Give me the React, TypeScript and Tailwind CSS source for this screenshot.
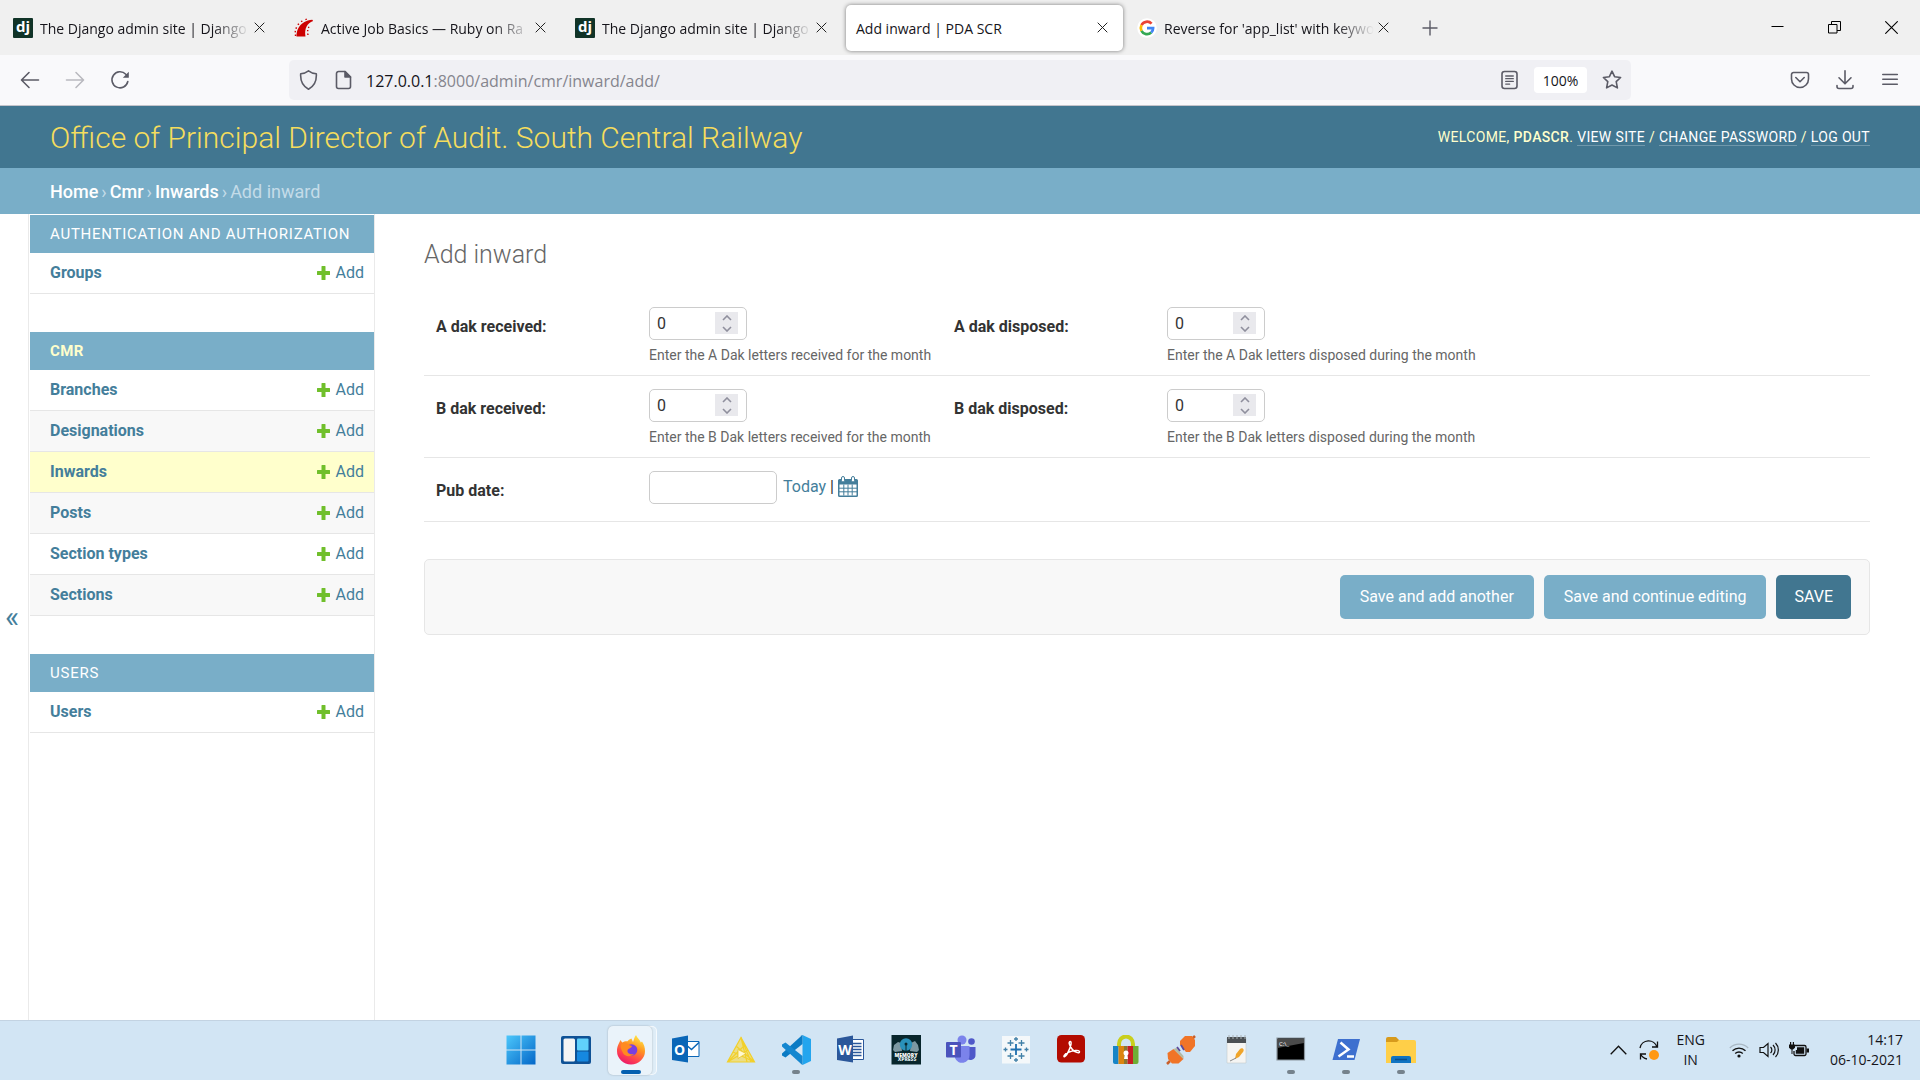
import { useState, type ReactNode } from "react";

interface Tab {
  title: string;
  icon?: "django" | "rails" | "google";
  active?: boolean;
}

const TABS: Tab[] = [
  { title: "The Django admin site | Django", icon: "django" },
  { title: "Active Job Basics — Ruby on Ra", icon: "rails" },
  { title: "The Django admin site | Django", icon: "django" },
  { title: "Add inward | PDA SCR", active: true },
  { title: "Reverse for 'app_list' with keywo", icon: "google" },
];

const APPS = [
  { name: "Authentication and Authorization", models: ["Groups"] },
  { name: "CMR", models: ["Branches", "Designations", "Inwards", "Posts", "Section types", "Sections"], current: true },
  { name: "Users", models: ["Users"] },
];

const App = () => (
  <div className="flex min-h-screen flex-col bg-white font-['Roboto',sans-serif] text-[#333]">
    <TabStrip />
    <Toolbar />
    <SiteHeader />
    <div className="flex grow">
      <Sidebar />
      <InwardForm />
    </div>
    <Taskbar />
  </div>
);

/* ---------- browser chrome ---------- */

const TabStrip = () => (
  <div className="flex h-[55px] items-center bg-[#f0f0f0] pl-px font-['Open_Sans',sans-serif]">
    {TABS.map((tab, i) => (
      <div
        key={i}
        className={
          tab.active
            ? "mx-0.5 flex h-[46px] w-[277px] items-center gap-1 rounded-[5px] bg-white pr-[15px] pl-2.5 shadow-[0_0_4px_rgba(0,0,0,0.5)]"
            : "mx-0.5 flex h-[46px] w-[277px] items-center gap-1 pr-[15px] pl-2.5"
        }
      >
        {tab.icon && <Favicon name={tab.icon} />}
        <span
          className={
            tab.active
              ? "grow pt-0.5 text-sm whitespace-nowrap text-[#15141a]"
              : "ml-[3px] grow pt-0.5 text-sm whitespace-nowrap text-[#15141a] [mask-image:linear-gradient(to_right,black_82%,transparent)]"
          }
        >
          {tab.title}
        </span>
        <button aria-label="Close tab">
          <svg width="11" height="11" viewBox="0 0 11 11" stroke="#222" fill="none"><path d="M.7.7l9.6 9.6M10.3.7L.7 10.3" /></svg>
        </button>
      </div>
    ))}
    <button aria-label="New tab" className="ml-4">
      <svg width="16" height="16" viewBox="0 0 16 16" stroke="#5b5b66" strokeWidth="1.4"><path d="M8 .5v15M.5 8h15" /></svg>
    </button>
    <div className="ml-auto flex items-center gap-11 pr-[22px]">
      <button aria-label="Minimize">
        <svg width="13" height="13" viewBox="0 0 13 13" stroke="#000"><path d="M.5 5.5h12" /></svg>
      </button>
      <button aria-label="Restore">
        <svg width="13" height="13" viewBox="0 0 13 13" stroke="#000" fill="none">
          <path d="M.5 3.5h8.5v8.5H.5zM3.5 3.5v-3h9v9H9" />
        </svg>
      </button>
      <button aria-label="Close window">
        <svg width="13" height="13" viewBox="0 0 13 13" stroke="#000" strokeWidth="1.1"><path d="M.3.3l12.4 12.4M12.7.3L.3 12.7" /></svg>
      </button>
    </div>
  </div>
);

const Favicon = ({ name }: { name: "django" | "rails" | "google" }) => {
  if (name === "django") {
    return (
      <span className="flex size-5 shrink-0 items-center justify-center rounded-[1px] bg-[#103327] pb-0.5 text-[15px] leading-none font-bold text-white">
        dj
      </span>
    );
  }
  if (name === "rails") {
    return (
      <svg className="shrink-0" width="20" height="20" viewBox="0 0 20 20" fill="#c00">
        <path d="M2.5 18.5c0-6.500 3-15.500 15.800-16.800l.8 1.300c-6 2-9 8-7.600 15.500z" />
        <path d="M.7 12.700l1.400.4-.3 1.300-1.300-.2zM1.900 9l1.300.7-.6 1.200-1.300-.5zM4.300 5.200l1.100 1-.9 1-1.200-.9zM8 2.400l.7 1.200-1.200.7-.8-1.200zM12.600.6l.4 1.200-1.400.4-.4-1.100zM.8 16.500h1.300V18H.8zM13 15.500h1.400l.3 1.400h-1.400zM13 12h1.400v1.300H13zM14.300 8.500l1.200.5-.5 1.200-1.200-.5z" />
      </svg>
    );
  }
  return (
    <svg className="shrink-0" width="20" height="20" viewBox="0 0 20 20" fill="none" strokeWidth="2.700">
      <circle cx="10" cy="10" r="9.800" fill="#fff" />
      <path d="M14.600 5.700A6.200 6.200 0 0 0 4.500 7.200" stroke="#ea4335" />
      <path d="M4.500 7.200a6.200 6.200 0 0 0 0 5.600" stroke="#fbbc05" />
      <path d="M4.500 12.800a6.200 6.200 0 0 0 9.700 1.800" stroke="#34a853" />
      <path d="M14.200 14.600a6 6 0 0 0 1.900-4.400H10" stroke="#4285f4" />
    </svg>
  );
};

const Toolbar = () => (
  <div className="flex h-[51px] items-center border-b border-[#c4c4cb] bg-[#f9f9fb] font-['Open_Sans',sans-serif] text-[#5b5b66]">
    <div className="flex w-[289px] items-center gap-[25px] pl-5">
      <button aria-label="Back"><ChromeIcon><path d="M18.500 10H2M9 2.500L1.500 10 9 17.500" /></ChromeIcon></button>
      <button aria-label="Forward" className="opacity-40"><ChromeIcon><path d="M1.500 10H18M11 2.500l7.500 7.500-7.500 7.500" /></ChromeIcon></button>
      <button aria-label="Reload">
        <ChromeIcon>
          <path d="M17.800 11.500a8 8 0 1 1-2-7.200l1.500 1.500" />
          <path d="M18.800 1.800v6h-6z" fill="currentColor" stroke="none" />
        </ChromeIcon>
      </button>
    </div>
    <div className="flex h-10 grow items-center rounded-[5px] bg-[#f0f0f4] px-[9px]">
      <ChromeIcon><path d="M10.500 .8C13 2.700 15.500 3.500 18.300 3.700c.5 6.800-1.600 12.300-7.800 15.500C4.300 16 2.200 10.500 2.700 3.700 5.500 3.500 8 2.700 10.500 .8z" /></ChromeIcon>
      <span className="ml-4 flex">
        <ChromeIcon>
          <path d="M4.500 1.500H11l5.500 5.500v9.500a2 2 0 0 1-2 2h-10a2 2 0 0 1-2-2v-13a2 2 0 0 1 2-2z" />
          <path d="M11 1.500V7h5.500z" fill="currentColor" />
        </ChromeIcon>
      </span>
      <div className="ml-3 grow pt-0.5 text-base whitespace-nowrap text-[#85858e]">
        <span className="text-[#15141a]">127.0.0.1</span>:8000/admin/cmr/inward/add/
      </div>
      <button aria-label="Reader view">
        <ChromeIcon>
          <rect x="2" y="1.500" width="15" height="17" rx="2.500" />
          <path d="M5.700 6h7.600M5.700 8.700h7.600M5.700 11.400h7.600M5.700 14.100h4" strokeWidth="1.300" />
        </ChromeIcon>
      </button>
      <button className="ml-3.5 h-[26px] w-[53px] rounded-[4px] bg-white pt-px text-sm text-[#15141a]">100%</button>
      <button aria-label="Bookmark" className="ml-[15px]">
        <ChromeIcon><path d="M10 1.200l2.600 5.500 6 .8-4.400 4.200 1.200 6.200L10 15l-5.400 2.900 1.200-6.200L1.400 7.500l6-.8z" /></ChromeIcon>
      </button>
    </div>
    <div className="flex w-[289px] items-center justify-end gap-[25px] pr-5">
      <button aria-label="Pocket">
        <ChromeIcon><path d="M3.500 2.500h13a2 2 0 0 1 2 2V9a8.500 8.500 0 0 1-17 0V4.500a2 2 0 0 1 2-2zM5.800 7.500L10 11.700l4.200-4.200" /></ChromeIcon>
      </button>
      <button aria-label="Downloads">
        <ChromeIcon><path d="M10 .8v12.500M4 7.800l6 6 6-6M2 15.500v1a2 2 0 0 0 2 2h12a2 2 0 0 0 2-2v-1" /></ChromeIcon>
      </button>
      <button aria-label="Menu"><ChromeIcon><path d="M2.800 4.500h14.500M2.800 9.300h14.500M2.800 14.200h14.500" /></ChromeIcon></button>
    </div>
  </div>
);

const ChromeIcon = ({ children }: { children: ReactNode }) => (
  <svg className="shrink-0" width="20" height="20" viewBox="0 0 20 20" fill="none" stroke="currentColor" strokeWidth="1.600" strokeLinecap="round" strokeLinejoin="round">
    {children}
  </svg>
);

/* ---------- admin site ---------- */

const SiteHeader = () => (
  <header>
    <div className="flex h-[62px] items-center justify-between bg-[#417690] px-[50px] text-[#ffc]">
      <a href="#" className="text-[30px] font-light text-[#f5dd5d]">Office of Principal Director of Audit. South Central Railway</a>
      <div className="text-sm tracking-wide whitespace-nowrap uppercase">
        Welcome, <strong className="font-medium">pdascr</strong>. <UserLink>View site</UserLink> / <UserLink>Change password</UserLink> /{" "}
        <UserLink>Log out</UserLink>
      </div>
    </div>
    <nav className="flex h-[46px] items-center gap-[3px] bg-[#79aec8] px-[50px] pt-0.5 text-lg text-[#c4dce8]">
      <a href="#" className="font-medium text-white">Home</a>›<a href="#" className="font-medium text-white">Cmr</a>›
      <a href="#" className="font-medium text-white">Inwards</a>› <span>Add inward</span>
    </nav>
  </header>
);

const UserLink = ({ children }: { children: ReactNode }) => (
  <a href="#" className="border-b border-white/25 text-white">{children}</a>
);

const Sidebar = () => (
  <>
    <button aria-label="Toggle navigation" className="w-[29px] border-r border-[#eaeaea] pr-1 text-3xl text-[#447e9b]">«</button>
    <nav className="flex w-[346px] flex-col gap-[38px] border-r border-[#eaeaea] pt-px pl-px">
      {APPS.map((app) => (
        <table key={app.name} className="w-full border-separate border-spacing-0 text-base">
          <caption
            className={
              app.current
                ? "h-[38px] bg-[#79aec8] px-5 text-left text-[15px] leading-[38px] font-bold tracking-wide text-[#ffc] uppercase"
                : "h-[38px] bg-[#79aec8] px-5 text-left text-[15px] leading-[38px] tracking-wider text-white uppercase"
            }
          >
            <a href="#">{app.name}</a>
          </caption>
          <tbody>
            {app.models.map((model, i) => (
              <ModelRow key={model} model={model} alt={i % 2 === 1} />
            ))}
          </tbody>
        </table>
      ))}
    </nav>
  </>
);

const ModelRow = ({ model, alt }: { model: string; alt: boolean }) => {
  const bg = model === "Inwards" ? "bg-[#ffc]" : alt ? "bg-[#f8f8f8]" : "bg-white";
  return (
    <tr className={`h-[41px] text-[#447e9b] ${bg}`}>
      <th scope="row" className="border-b border-[#e6e6e6] pl-5 text-left font-bold"><a href="#">{model}</a></th>
      <td className="border-b border-[#e6e6e6] pr-2.5">
        <a href="#" className="flex items-center justify-end gap-1.5">
          <svg width="13" height="14" viewBox="0 0 13 14" fill="#70bf2b"><path d="M5 0h3a.5.5 0 0 1 .5.5V5h4a.5.5 0 0 1 .5.5v3a.5.5 0 0 1-.5.5h-4v4.500a.5.5 0 0 1-.5.5H5a.5.5 0 0 1-.5-.5V9h-4a.5.5 0 0 1-.5-.5v-3A.5.5 0 0 1 .5 5h4V.5A.5.5 0 0 1 5 0z" /></svg>
          Add
        </a>
      </td>
    </tr>
  );
};

const InwardForm = () => (
  <main className="grow pt-[26px] pr-[50px] pl-[49px]">
    <h1 className="text-[25px] leading-[30px] font-light text-[#666]">Add inward</h1>
    <form onSubmit={(e) => e.preventDefault()}>
      <div className="mt-6">
        <DakRow letter="A" />
        <DakRow letter="B" />
        <div className="flex h-16 border-b border-[#e6e6e6] px-3 pt-[13px]">
          <label htmlFor="id_pub_date" className="w-[213px] pt-2.5 text-base leading-5 font-bold">Pub date:</label>
          <input id="id_pub_date" type="text" className="h-[33px] w-32 rounded-[5px] border border-[#ccc] px-[7px]" />
          <span className="ml-1.5 flex h-8 items-center gap-1 text-base">
            <a href="#" className="text-[#447e9b]">Today</a>|
            <a href="#" aria-label="Open calendar" className="pb-0.5"><CalendarIcon /></a>
          </span>
        </div>
      </div>
      <div className="mt-[37px] flex items-center justify-end gap-2.5 rounded-[5px] border border-[#e6e6e6] bg-[#f8f8f8] px-[18px] py-[15px] text-base text-white">
        <button className="h-11 rounded-[5px] bg-[#79aec8] px-5">Save and add another</button>
        <button className="h-11 rounded-[5px] bg-[#79aec8] px-5">Save and continue editing</button>
        <button className="h-11 rounded-[5px] bg-[#417690] px-[18px] uppercase">Save</button>
      </div>
    </form>
  </main>
);

const DakRow = ({ letter }: { letter: string }) => (
  <div className="grid h-[82px] grid-cols-[518px_1fr] border-b border-[#e6e6e6] px-3 pt-[13px]">
    <NumberField label={`${letter} dak received:`} help={`Enter the ${letter} Dak letters received for the month`} />
    <NumberField label={`${letter} dak disposed:`} help={`Enter the ${letter} Dak letters disposed during the month`} />
  </div>
);

const NumberField = ({ label, help }: { label: string; help: string }) => {
  const [value, setValue] = useState(0);
  const id = "id_" + label.toLowerCase().replace(":", "").replace(/ /g, "_");
  return (
    <div className="flex">
      <label htmlFor={id} className="w-[213px] shrink-0 pt-2.5 text-base leading-5 font-bold">{label}</label>
      <div>
        <div className="relative h-[33px] w-[98px]">
          <input id={id} type="number" value={value} onChange={(e) => setValue(Number(e.target.value))}
            className="h-full w-full [appearance:textfield] rounded-[5px] border border-[#ccc] px-[7px] text-base [&::-webkit-inner-spin-button]:appearance-none" />
          <div className="absolute top-[5px] right-[9px] flex h-[22px] w-[23px] flex-col bg-[#e9e9ed]">
            <button type="button" aria-label="Increase" className="flex h-[11px] items-center justify-center" onClick={() => setValue(value + 1)}>
              <svg width="10" height="6" viewBox="0 0 10 6" fill="none" stroke="#8f8f9d" strokeWidth="1.600"><path d="M1 5l4-4 4 4" /></svg>
            </button>
            <button type="button" aria-label="Decrease" className="flex h-[11px] items-center justify-center" onClick={() => setValue(value - 1)}>
              <svg width="10" height="6" viewBox="0 0 10 6" fill="none" stroke="#8f8f9d" strokeWidth="1.600"><path d="M1 1l4 4 4-4" /></svg>
            </button>
          </div>
        </div>
        <p className="mt-1.5 text-sm leading-[18px] whitespace-nowrap text-[#666]">{help}</p>
      </div>
    </div>
  );
};

const CalendarIcon = () => (
  <svg width="20" height="21" viewBox="0 0 20 21">
    <path d="M1.500 3h17A1.500 1.500 0 0 1 20 4.500v15a1.500 1.500 0 0 1-1.500 1.500h-17A1.500 1.500 0 0 1 0 19.500v-15A1.500 1.500 0 0 1 1.500 3z" fill="#447e9b" />
    <path d="M1.500 8.500h17v11h-17z" fill="#fff" />
    <path d="M1 12.200h18M1 15.800h18M5.800 8.500v11M10 8.500v11M14.200 8.500v11" stroke="#447e9b" strokeWidth="1" />
    <rect x="3.500" y=".5" width="3" height="5.500" rx="1.500" fill="#fff" stroke="#447e9b" />
    <rect x="13.500" y=".5" width="3" height="5.500" rx="1.500" fill="#fff" stroke="#447e9b" />
  </svg>
);

/* ---------- taskbar ---------- */

const Taskbar = () => (
  <footer className="grid h-[60px] grid-cols-[1fr_auto_1fr] border-t border-[#c3d3e2] bg-[#d2e5f4] font-['Open_Sans',sans-serif] text-sm text-[#15141a]">
    <div />
    <div className="flex pl-0.5">
      <TaskItem label="Start">
        <defs>
          <linearGradient id="win" x1="0" y1="0" x2="1" y2="1"><stop stopColor="#4cc7fb" /><stop offset="1" stopColor="#0467c8" /></linearGradient>
        </defs>
        <path d="M.5.5h14v14H.5zM15.500.5h14v14h-14zM.5 15.500h14v14H.5zM15.500 15.500h14v14h-14z" fill="url(#win)" />
      </TaskItem>
      <TaskItem label="Widgets">
        <rect y="1" width="30" height="28" rx="2" fill="#0f5296" />
        <rect x="2.500" y="3.500" width="11.500" height="23" rx="1.500" fill="#f4f4f4" />
        <rect x="16" y="3.500" width="11.500" height="12" rx="1" fill="#61d1fb" />
        <rect x="16" y="16.500" width="11.500" height="10" rx="1" fill="#1688e0" />
      </TaskItem>
      <TaskItem label="Firefox" active>
        <defs>
          <linearGradient id="fx" x1=".8" y1="0" x2=".3" y2="1"><stop stopColor="#fff04a" /><stop offset=".4" stopColor="#ff9420" /><stop offset=".75" stopColor="#ff4050" /><stop offset="1" stopColor="#e9186b" /></linearGradient>
        </defs>
        <path d="M4.500 5c.5 1 1 1.800 1.800 2.400C8 6.200 10 6 11.500 6.200 13 4.500 15 3.500 15.500 3.500L17 7c.8-2 1.200-4.500 3-7 1 3 4 4.500 4.800 7.500l1.200-1c2 3 3 6 3 9.500A14 13.500 0 0 1 1 16C1 11 3 8.500 4.500 5z" fill="url(#fx)" />
        <circle cx="15.500" cy="15" r="5.800" fill="#7a3fe0" />
        <path d="M5 9c3-2 6-1 8 1l3 1c-1 3-4 2-4.500 4.500S14 20 18 19c-3 3-9 3-11-1S4 12 5 9z" fill="#ff8a20" />
      </TaskItem>
      <TaskItem label="Outlook">
        <path d="M13 6.500h15v15H13z" fill="#fff" stroke="#0a66b7" />
        <path d="M13 8l7.500 6.500L28 7.500" fill="none" stroke="#0a66b7" strokeWidth="1.500" />
        <path d="M1 3.500L17 .5v27L1 25z" fill="#0a66b7" />
        <IconText x={8.500}>O</IconText>
      </TaskItem>
      <TaskItem label="Prism">
        <path d="M15 2.500L28.500 27H1.500zM15 2.500L25 27M15 2.500L21 27M1.500 27L19 10M1.500 27L22 15M28.500 27L7 17M28.500 27L10 11" fill="#f6dc55" fillOpacity=".7" stroke="#f2d02a" strokeWidth="1.200" />
        <path d="M12 14.500l8 4-8 5z" fill="#fff8cf" stroke="#e9c628" strokeWidth=".8" />
      </TaskItem>
      <TaskItem label="Visual Studio Code" running>
        <path d="M21.500 0L30 4v22l-8.500 4z" fill="#23a5ee" />
        <path d="M21.500 0v9L4.500 22.500 1 20.500v-2L21 .3z" fill="#0b7bc4" />
        <path d="M21.500 30v-9L4.500 7.500 1 9.500v2L21 29.700z" fill="#1487d0" />
      </TaskItem>
      <TaskItem label="Word">
        <path d="M13 4.500h14.500v20H13z" fill="#fff" stroke="#2b579a" />
        <path d="M17 8.500h8.500M17 11.500h8.500M17 14.500h8.500M17 17.500h8.500M17 20.500h8.500" stroke="#2b579a" strokeWidth="1.300" />
        <path d="M1 3.500L17 .5v27L1 25z" fill="#2b579a" />
        <IconText x={9}>W</IconText>
      </TaskItem>
      <TaskItem label="Memory Xpress">
        <path d="M.5 0h29.500v29.500H.5z" fill="#08262c" />
        <path d="M3 10l4-3 3 1 1 8-7 1-2-2zM27 10l-3-4-4 2-1 8 7 1 2-2z" fill="#7d98a2" />
        <circle cx="15" cy="9.500" r="6.200" fill="#2a91ba" />
        <circle cx="15" cy="9" r="1.500" fill="#08262c" />
        <path d="M15 9v7" stroke="#08262c" />
        <text x="15" y="21.500" textAnchor="middle" fontSize="5" fontWeight="800" fill="#fff">MEMORY</text>
        <text x="16" y="26" textAnchor="middle" fontSize="5" fontWeight="800" fill="#dfe8ea">XPRESS</text>
      </TaskItem>
      <TaskItem label="Teams">
        <circle cx="16" cy="5" r="4.500" fill="#7b83eb" />
        <circle cx="25.500" cy="6.500" r="3.300" fill="#5059c9" />
        <path d="M20 12h9.500v8a5 5 0 0 1-9 3z" fill="#5059c9" />
        <path d="M9 11h14.500v9a7.500 7.500 0 0 1-14.500 3z" fill="#7b83eb" />
        <rect x="0" y="7" width="15" height="15.500" rx="1" fill="#4b53bc" />
        <IconText x={7.500} y={19.500}>T</IconText>
      </TaskItem>
      <TaskItem label="Tableau">
        <path d="M1 1h28v27.500H1z" fill="#f4f8fa" />
        <path d="M15 9v11M9.500 14.500h11" stroke="#1f6fae" strokeWidth="1.800" />
        <path d="M9.500 5v6M6.500 8h6M20.500 5v6M17.500 8h6M9.500 18v6M6.500 21h6M20.500 18v6M17.500 21h6M15 2v4M13 4h4M15 23v4M13 25h4M4.500 12.500v4M2.500 14.500h4M25.500 12.500v4M23.500 14.500h4" stroke="#4180a8" strokeWidth="1.300" />
      </TaskItem>
      <TaskItem label="Acrobat Reader">
        <rect x="1" y="0" width="28" height="27.500" rx="4.500" fill="#b30b00" />
        <path d="M14.500 6.500c-2.500 0-1.200 4 1.500 7.500 2.500 3.200 7.500 5 7.500 2.700 0-2.200-7-1.200-11 .6-4.500 2-5.500 5-3.800 4.200 3-1.500 8.300-14.500 5.800-15z" fill="none" stroke="#fff" strokeWidth="1.500" />
      </TaskItem>
      <TaskItem label="Password Manager">
        <path d="M8 12V9a7 7.500 0 0 1 14 0v3" fill="none" stroke="#c9cf1d" strokeWidth="4" />
        <path d="M2 11h5.500v18H4a2 2 0 0 1-2-2z" fill="#1685c7" />
        <path d="M7.500 11H13v18H7.500z" fill="#dc8510" />
        <path d="M13 11h3.500v18H13z" fill="#8c7730" />
        <path d="M16.500 11H22v18h-5.500z" fill="#c71e23" />
        <path d="M22 11h5.500v16a2 2 0 0 1-2 2H22z" fill="#6fae35" />
        <circle cx="15" cy="18" r="2.500" fill="#fff" />
        <path d="M14 18h2l1 6h-4z" fill="#fff" />
      </TaskItem>
      <TaskItem label="Database Connector">
        <path d="M26 4l3-3M4 26l-3 3" stroke="#c9602b" strokeWidth="2.500" />
        <path d="M14 6l5-5h7l3 4v6l-5 6h-4l-6-7z" fill="#f07427" />
        <path d="M1.500 18l6-4 10 10-5 4.500H6L2 24z" fill="#f07427" />
        <path d="M7.500 14l3-1 7 8v3z" fill="#b3b9a0" />
        <path d="M11 12l3 4M15 10l3 5" stroke="#5b4a9c" strokeWidth="1.800" />
      </TaskItem>
      <TaskItem label="Notes">
        <path d="M6 3h19v25H6z" fill="#f5f5f3" stroke="#c3cace" strokeWidth=".6" />
        <path d="M6 2h19v6H6z" fill="#4b5054" />
        <path d="M8 0v4M12 0v4M16 0v4M20 0v4M24 0v4" stroke="#aab1b5" />
        <path d="M14 24l1-5 4-5c2-2 5 0 3 3l-4 5z" fill="#f0a52a" />
        <path d="M9 26l6-3" stroke="#888" />
      </TaskItem>
      <TaskItem label="Command Prompt" running>
        <path d="M1 3h27.500v22H1z" fill="#000" stroke="#8c979f" strokeWidth="1.200" />
        <path d="M1.500 4h26.500v4l-26.500 5z" fill="#4b4b4b" />
        <text x="3" y="11" fontSize="6" fill="#fff">C:\_</text>
      </TaskItem>
      <TaskItem label="PowerShell" running>
        <path d="M7 4h22l-5.500 21H1.500z" fill="#3e70cf" />
        <path d="M9.500 7.500l8 7-10 7M16 21.500h7" fill="none" stroke="#fff" strokeWidth="2.500" />
      </TaskItem>
      <TaskItem label="File Explorer" running>
        <path d="M0 4a2 2 0 0 1 2-2h8l3 3v4H0z" fill="#d79a1c" />
        <path d="M0 7h11l2-2h15a2 2 0 0 1 2 2v21H0z" fill="#ffcf48" />
        <path d="M5 28v-5a2 2 0 0 1 2-2h16a2 2 0 0 1 2 2v5z" fill="#1174c2" />
        <path d="M9 24.500h12" stroke="#0b4f8c" strokeWidth="1.500" />
      </TaskItem>
    </div>
    <div className="flex items-center justify-end pr-[17px] pb-0.5 leading-5">
      <svg width="17" height="10" viewBox="0 0 17 10" fill="none" stroke="#111" strokeWidth="1.300"><path d="M.7 9.200l7.800-8 7.800 8" /></svg>
      <svg className="ml-[11px]" width="22" height="22" viewBox="0 0 22 22" fill="none" stroke="#111" strokeWidth="1.300">
        <path d="M2 9a8.800 8.800 0 0 1 17-1M19.500 2.500V8H14M9 20a9 9 0 0 1-6.500-5M2.500 20.500V15H8" />
        <circle cx="16" cy="16" r="5" fill="#ff9812" stroke="none" />
      </svg>
      <div className="ml-4 text-center">ENG<br />IN</div>
      <div className="ml-6 flex items-center gap-2.5">
        <svg width="20" height="20" viewBox="0 0 20 20" fill="none" stroke="#111" strokeWidth="1.300">
          <path d="M.8 8a13 13 0 0 1 18.400 0" stroke="#a9b8c4" />
          <path d="M3.500 10.800a9.200 9.200 0 0 1 13 0M6.200 13.500a5.500 5.500 0 0 1 7.600 0" />
          <circle cx="10" cy="16" r="1.600" fill="#111" stroke="none" />
        </svg>
        <svg width="20" height="20" viewBox="0 0 20 20" fill="none" stroke="#111" strokeWidth="1.200">
          <path d="M1 7.500h3.500L9 3.500v13l-4.500-4H1zM11.500 7a4 4 0 0 1 0 6M14 5a7 7 0 0 1 0 10M16.500 3a10 10 0 0 1 0 14" />
        </svg>
        <svg width="20" height="20" viewBox="0 0 20 20" fill="none" stroke="#111" strokeWidth="1.300">
          <path d="M6 5.500h9.500A1.500 1.500 0 0 1 17 7v7a1.500 1.500 0 0 1-1.500 1.500h-9A1.500 1.500 0 0 1 5 14v-3" />
          <path d="M8 7.200h7.200v6.500H6.800V10H8zM17.500 8.500H20v4h-2.500zM0 4.500h6v3.200L4 9.500H2L0 7.700zM1 2h1.200v3H1zM3.800 2H5v3H3.800zM2.500 9h1v5h-1z" fill="#111" stroke="none" />
        </svg>
      </div>
      <div className="ml-[21px] text-right">14:17<br />06-10-2021</div>
    </div>
  </footer>
);

interface TaskItemProps {
  label: string;
  active?: boolean;
  running?: boolean;
  children: ReactNode;
}

const TaskItem = ({ label, active, running, children }: TaskItemProps) => (
  <button aria-label={label} className="relative flex w-[55px] items-center justify-center pb-0.5">
    {active && (
      <>
        <span className="absolute inset-y-[5px] right-0.5 left-2.5 rounded-[5px] border border-white/70 bg-white/30" />
        <span className="absolute inset-y-[5px] right-[7px] left-1 rounded-[5px] bg-[#eaf3fa] shadow-[0_0_2px_rgba(0,0,0,0.25)]" />
        <span className="absolute bottom-1.5 h-1 w-5 rounded-full bg-[#0560b0]" />
      </>
    )}
    {running && <span className="absolute bottom-1.5 h-1 w-2 rounded-full bg-[#75828c]" />}
    <svg className="relative" width="30" height="30" viewBox="0 0 30 30">{children}</svg>
  </button>
);

const IconText = ({ x, y = 20, children }: { x: number; y?: number; children: ReactNode }) => (
  <text x={x} y={y} textAnchor="middle" fontSize="14" fontWeight="700" fill="#fff">{children}</text>
);

export default App;
